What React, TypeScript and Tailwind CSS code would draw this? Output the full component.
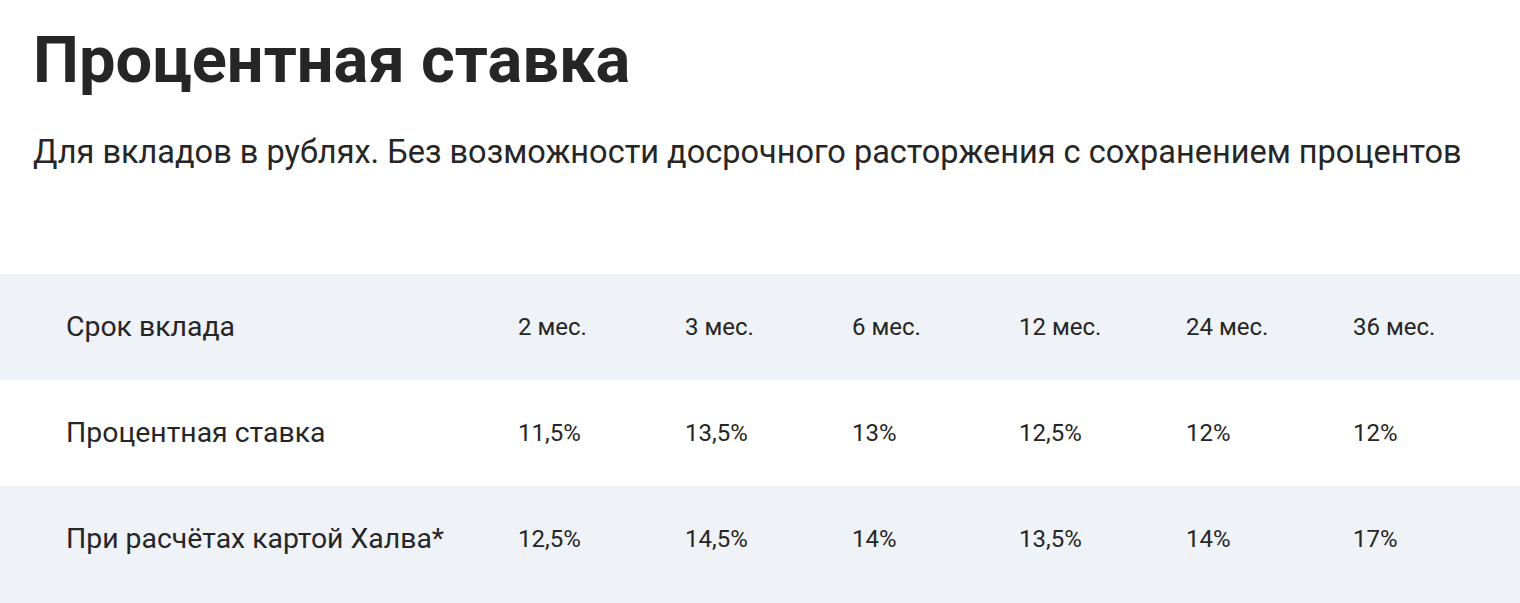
const terms = ["2 мес.", "3 мес.", "6 мес.", "12 мес.", "24 мес.", "36 мес."];

const rows = [
  { label: "Процентная ставка", values: ["11,5%", "13,5%", "13%", "12,5%", "12%", "12%"] },
  { label: "При расчётах картой Халва*", values: ["12,5%", "14,5%", "14%", "13,5%", "14%", "17%"] },
];

function Row({ label, values, shaded }: { label: string; values: string[]; shaded: boolean }) {
  return (
    <div className={`flex h-[106px] items-center pl-[66px] ${shaded ? "bg-[#eff2f7]" : "bg-white"}`}>
      <div className="w-[452px] text-[28.4px] text-[#262626]">{label}</div>
      {values.map((v, i) => (
        <div key={i} className="w-[167px] text-[24px] text-[#262626]">
          {v}
        </div>
      ))}
    </div>
  );
}

export default function App() {
  return (
    <div className="min-h-[603px] bg-white" style={{ fontFamily: "Roboto, 'Liberation Sans', sans-serif" }}>
      <div className="px-[33px] pt-[21px]">
        <h1 className="text-[65px] font-bold leading-[1.2] text-[#262626]">Процентная ставка</h1>
        <p className="mt-[34px] text-[32.5px] leading-[1.2] text-[#262626]">
          Для вкладов в рублях. Без возможности досрочного расторжения с сохранением процентов
        </p>
      </div>
      <div className="mt-[102px] bg-[#eff2f7] pb-[24px]">
        <Row label="Срок вклада" values={terms} shaded />
        {rows.map((r, i) => (
          <Row key={r.label} label={r.label} values={r.values} shaded={i % 2 === 1} />
        ))}
      </div>
    </div>
  );
}
